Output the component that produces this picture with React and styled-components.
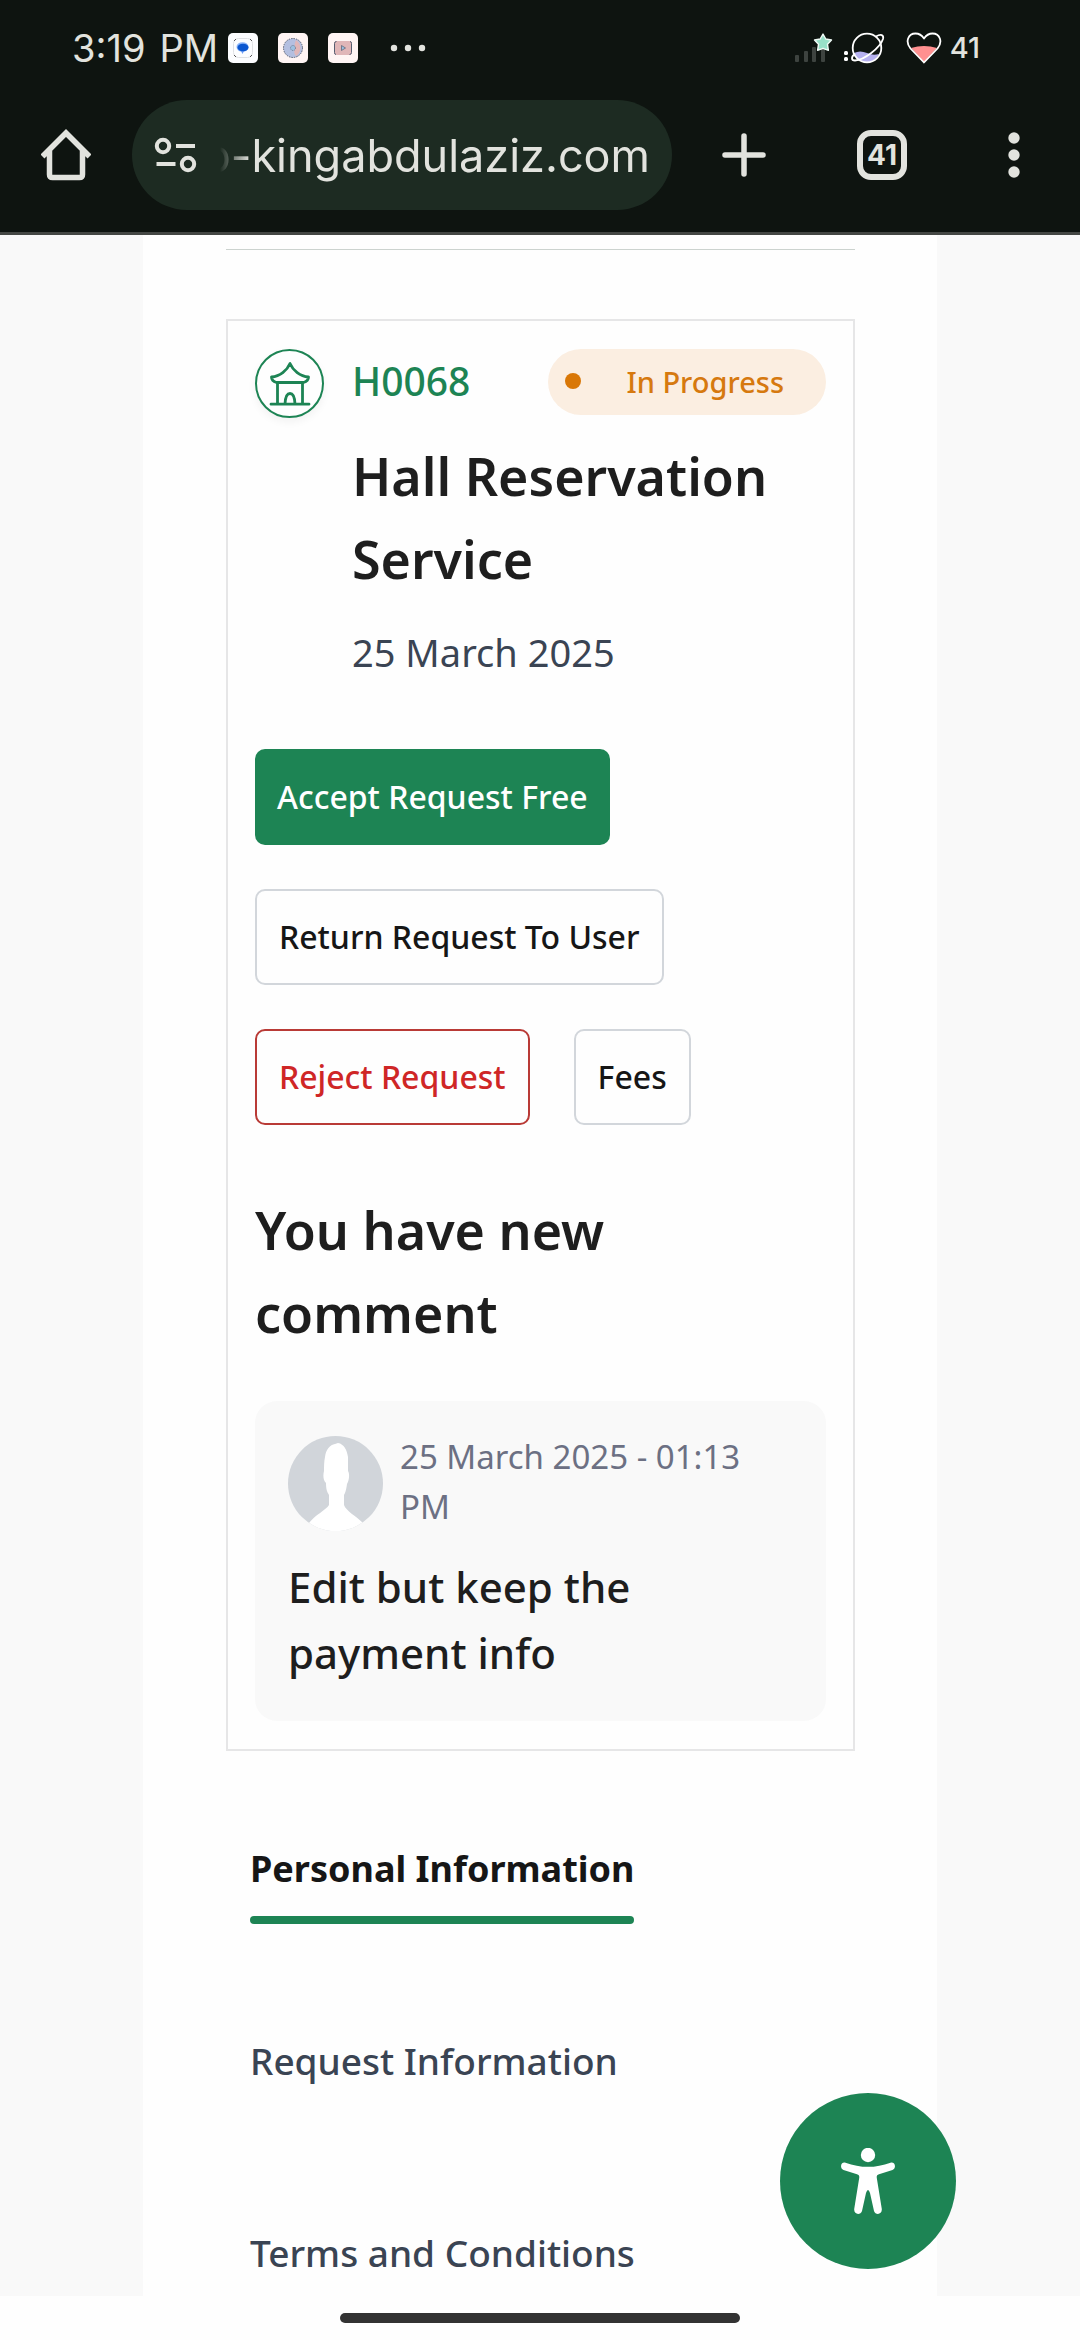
import React from "react";
import styled, { createGlobalStyle, css } from "styled-components";

const GlobalStyle = createGlobalStyle`
  *, *::before, *::after { box-sizing: border-box; }
  body { margin: 0; background: #fefefe; font-family: "Noto Sans", "Open Sans", sans-serif; }
  h1, h2, p { margin: 0; }
  button, input { font: inherit; color: inherit; margin: 0; padding: 0; border: 0; background: none; }
  svg { display: block; flex: none; }
`;

const green = "#1d8454";
const ink = "#1e1e1e";
const chrome = "#e2e3de";

const Screen = styled.div`
  display: flex;
  flex-direction: column;
  height: 100vh;
  overflow: hidden;
`;

/* ---------- browser chrome ---------- */

const Header = styled.header`
  flex: none;
  background: #0e1410;
  border-bottom: 3px solid #444744;
  color: ${chrome};
  font-family: Inter, Roboto, sans-serif;
`;

const StatusBar = styled.div`
  display: flex;
  align-items: center;
  justify-content: space-between;
  height: 96px;
  padding: 0 100px 0 72px;
`;

const StatusGroup = styled.div`
  display: flex;
  align-items: center;
  gap: ${(p) => p.$gap}px;
`;

const Clock = styled.time`
  display: flex;
  gap: 14px;
  font-size: 38px;
  line-height: 48px;
`;

const Battery = styled.span`
  font-size: 29px;
  font-weight: 500;
  line-height: 48px;
`;

const Toolbar = styled.div`
  display: flex;
  align-items: center;
  padding: 4px 0 22px;
`;

const ToolButton = styled.button`
  display: flex;
  align-items: center;
  justify-content: center;
  width: ${(p) => (p.$wide ? 144 : 132)}px;
  height: 96px;
`;

const AddressBar = styled.div`
  flex: 1;
  min-width: 0;
  display: flex;
  align-items: center;
  gap: 4px;
  height: 110px;
  padding: 0 22px;
  border-radius: 55px;
  background: #1d2b22;
`;

const UrlInput = styled.input`
  flex: 1;
  min-width: 0;
  height: 64px;
  text-align: right;
  font-size: 45px;
  outline: none;
  mask-image: linear-gradient(to right, transparent 18px, #000 48px);
`;

const TabCount = styled.span`
  display: flex;
  align-items: center;
  justify-content: center;
  width: 50px;
  height: 50px;
  border: 6px solid ${chrome};
  border-radius: 14px;
  font-size: 28px;
  font-weight: 700;
  line-height: 36px;
`;

/* ---------- page ---------- */

const Page = styled.main`
  flex: 1;
  min-height: 0;
  padding: 0 143px;
  overflow: hidden;
  background: #f9f9f9;
`;

const Sheet = styled.div`
  min-height: 100%;
  padding: 14px 82px 0 83px;
  background: #fefefe;
`;

const Divider = styled.hr`
  height: 1px;
  margin: 0 0 69px;
  border: 0;
  background: #ccd3cf;
`;

const Card = styled.section`
  padding: 28px 27px;
  border: 2px solid #e6e6e7;
`;

const RequestHeader = styled.div`
  display: grid;
  grid-template-columns: 69px 1fr;
  column-gap: 28px;
`;

const ServiceIcon = styled.div`
  display: flex;
  align-items: center;
  justify-content: center;
  width: 69px;
  height: 69px;
  border: 2px solid ${green};
  border-radius: 50%;
  box-shadow: 0 4px 8px rgba(0, 0, 0, 0.05);
  color: ${green};
`;

const RequestMeta = styled.div`
  display: flex;
  align-items: center;
  justify-content: space-between;
  height: 66px;
  margin-bottom: 19px;
`;

const RequestCode = styled.span`
  padding-bottom: 2px;
  color: ${green};
  font-size: 39px;
  font-weight: 500;
  line-height: 56px;
`;

const StatusBadge = styled.span`
  display: flex;
  align-items: center;
  gap: 45px;
  height: 66px;
  padding: 0 42px 2px 17px;
  border-radius: 33px;
  background: #fbeee1;
  color: #d6790f;
  font-size: 29px;
  font-weight: 500;

  &::before {
    content: "";
    width: 16px;
    height: 16px;
    border-radius: 50%;
    background: #d97706;
  }
`;

const Title = styled.h1`
  color: ${ink};
  font-size: 52px;
  font-weight: 600;
  line-height: 83px;
`;

const RequestDate = styled.p`
  margin-top: 24px;
  color: #3a4453;
  font-size: 38px;
  line-height: 56px;
`;

const Actions = styled.div`
  display: flex;
  flex-wrap: wrap;
  gap: 44px;
  margin: 69px 0 63px;
`;

const variants = {
  primary: css`
    background: ${green};
    color: #fff;
  `,
  outline: css`
    border: 2px solid #d2d6db;
    color: #161616;
  `,
  danger: css`
    border: 2px solid #b93a36;
    color: #cf2626;
  `,
};

const ActionButton = styled.button`
  height: 96px;
  padding: 0 22px;
  border-radius: 10px;
  font-size: 32px;
  font-weight: 500;
  line-height: 50px;
  ${(p) => variants[p.$variant]}
`;

const CommentTitle = styled(Title).attrs({ as: "h2" })`
  margin-bottom: 47px;
`;

const Comment = styled.article`
  padding: 31px 33px 35px;
  border-radius: 22px;
  background: #f9f9f9;
`;

const CommentHead = styled.div`
  display: flex;
  align-items: flex-start;
  gap: 17px;
  margin-bottom: 22px;
`;

const Avatar = styled.svg`
  width: 95px;
  height: 95px;
  margin-top: 4px;
  border-radius: 50%;
`;

const CommentTime = styled.p`
  max-width: 360px;
  color: #6c7083;
  font-size: 33px;
  line-height: 50px;
`;

const CommentText = styled.p`
  color: ${ink};
  font-size: 42px;
  font-weight: 500;
  line-height: 66px;
`;

const Tabs = styled.nav`
  display: flex;
  flex-direction: column;
  align-items: flex-start;
  gap: 109px;
  padding: 90px 24px 0;
`;

const TabLink = styled.a`
  color: #3a4453;
  font-size: 37px;
  font-weight: 500;
  line-height: 56px;
  text-decoration: none;

  &::after {
    content: "";
    display: block;
    height: 8px;
    margin-top: 19px;
    border-radius: 4px;
  }

  &[aria-current] {
    color: #161616;
    font-size: 36px;
    font-weight: 700;
  }

  &[aria-current]::after {
    background: ${green};
  }
`;

const AccessibilityButton = styled.button`
  position: fixed;
  right: 124px;
  bottom: 71px;
  display: flex;
  align-items: center;
  justify-content: center;
  width: 176px;
  height: 176px;
  border-radius: 50%;
  background: ${green};
  color: #fff;
`;

const GestureBar = styled.footer`
  flex: none;
  display: flex;
  justify-content: center;
  height: 44px;
  padding-top: 17px;
  background: #fefefe;

  &::before {
    content: "";
    width: 37%;
    height: 10px;
    border-radius: 5px;
    background: #333;
  }
`;

/* ---------- drawings ---------- */

const MessagesIcon = () => (
  <svg width="30" height="30" viewBox="0 0 30 30">
    <rect width="30" height="30" rx="5" fill="#fcfdff" />
    <rect x="5.5" y="5.5" width="19" height="19" rx="5" fill="none" stroke="#dfe1e4" />
    <path d="M6 8l2-2M22 6l2 2M6 22l2 2M22 24l2-2" stroke="#333" strokeWidth=".8" />
    <ellipse cx="14.500" cy="14" rx="6" ry="4.800" fill="#8ab4f8" />
    <path d="M12.500 17l2 4 1.500-3z" fill="#6b9df5" />
    <ellipse cx="15" cy="14.500" rx="5.500" ry="3.800" fill="#0b57d0" />
  </svg>
);

const RoundAppIcon = () => (
  <svg width="30" height="30" viewBox="0 0 30 30">
    <rect width="30" height="30" rx="5" fill="#fff5f4" />
    <circle cx="15" cy="15" r="9.500" fill="#b4bfe0" />
    <path d="M18 7a9.500 9.500 0 0 1 0 16q-3-3-1-7-1-5 1-9z" fill="#e0b6b8" />
    <circle cx="15" cy="15" r="9.500" fill="none" stroke="#555d70" strokeDasharray="1.500 1" />
    <circle cx="15" cy="15" r="2.500" fill="#9cc0e0" stroke="#555d70" strokeWidth=".7" strokeDasharray="1 1" />
  </svg>
);

const VideoAppIcon = () => (
  <svg width="30" height="30" viewBox="0 0 30 30">
    <rect width="30" height="30" rx="5" fill="#fff5f4" />
    <rect x="6" y="8" width="18" height="14" rx="3" fill="#e0b6b8" />
    <path d="M6.500 19.500v-9q0-2 2-2M23.500 10.500v9q0 2-2 2M8 21.500q-1.500 0-1.500-2M22 8.500q1.500 0 1.500 2" fill="none" stroke="#555d70" />
    <path d="M13.500 12.500l4 2.500-4 2.500z" fill="#9cc0e0" stroke="#555d70" strokeWidth=".7" />
  </svg>
);

const MoreDots = () => (
  <svg width="36" height="8" viewBox="0 0 36 8" fill={chrome}>
    <circle cx="4" cy="4" r="3.200" />
    <circle cx="18" cy="4" r="3.200" />
    <circle cx="32" cy="4" r="3.200" />
  </svg>
);

const SignalIcon = () => (
  <svg width="40" height="32" viewBox="0 0 40 32">
    <g fill="#3d433f">
      <rect x="0" y="23" width="4" height="7" rx="1" />
      <rect x="9" y="19" width="4" height="11" rx="1" />
      <rect x="17" y="15" width="4" height="15" rx="1" />
      <rect x="26" y="15" width="4" height="15" rx="1" />
    </g>
    <path d="M28 2l2.800 5 5.700 1-4 4.300.9 6-5.400-2-5.400 2 .9-6-4-4.300 5.700-1z" fill="#98e0c8" stroke="#f1fbf7" strokeWidth="1.400" strokeLinejoin="round" />
  </svg>
);

const PlanetIcon = () => (
  <svg width="42" height="32" viewBox="0 0 42 32">
    <rect x="0" y="19" width="4" height="4" rx="1.500" fill="#fff" />
    <rect x="0" y="25" width="4" height="4" rx="1.500" fill="#fff" />
    <path d="M10 21q6-3 13 0 6 3 12 1-4 8-12 8.500-10-.5-13-9.500z" fill="#b6b1f0" />
    <circle cx="23" cy="16" r="14.300" fill="none" stroke="#fff" strokeWidth="1.800" />
    <path d="M32 4.500c5-3 8-1.500 7 2.500C36 16 20 28 11 28.500c-4 0-4-4 0-6.500" fill="none" stroke="#fff" strokeWidth="1.800" />
  </svg>
);

const HeartIcon = () => (
  <svg width="36" height="32" viewBox="0 0 36 32">
    <path d="M5 16q13-4 26 0L18 30z" fill="#ff9090" />
    <path d="M18 30.500L4.500 16.500C-1 10 2 1.500 9.500 1.500c4 0 6.500 2 8.500 5 2-3 4.500-5 8.500-5 7.500 0 10.500 8.500 5 15z" fill="none" stroke="#fff" strokeWidth="1.800" strokeLinejoin="round" />
  </svg>
);

const HomeIcon = () => (
  <svg width="50" height="52" viewBox="0 0 50 52" fill="none" stroke={chrome} strokeWidth="5.500">
    <path d="M1.500 27.500L25 4l23.500 23.500M8.500 21v24.500q0 3 3 3h27q3 0 3-3V21" />
  </svg>
);

const TuneIcon = () => (
  <svg width="44" height="36" viewBox="0 0 44 36" fill="none" stroke={chrome} strokeWidth="4">
    <circle cx="9" cy="9" r="6.200" />
    <circle cx="34" cy="27" r="6.200" />
    <path d="M22 9h19M2.500 27h19" />
  </svg>
);

const PlusIcon = () => (
  <svg width="44" height="44" viewBox="0 0 44 44" stroke={chrome} strokeWidth="5.500" strokeLinecap="round">
    <path d="M22 3v38M3 22h38" />
  </svg>
);

const KebabIcon = () => (
  <svg width="12" height="46" viewBox="0 0 12 46" fill={chrome}>
    <circle cx="6" cy="6" r="5.700" />
    <circle cx="6" cy="23" r="5.700" />
    <circle cx="6" cy="40" r="5.700" />
  </svg>
);

const HallIcon = () => (
  <svg width="42" height="45" viewBox="0 0 42 45" fill="none" stroke="currentColor" strokeWidth="2.800" strokeLinecap="round" strokeLinejoin="round">
    <path d="M21 2.500c-3 7-10 13-18.500 13.500 0 3 2 4.500 5 5.500h27c3-1 5-2.500 5-5.500C31 15.500 24 9.500 21 2.500z" />
    <path d="M8.500 22v21M33.500 22v21M2 43.200h38M16 43q.500-10.500 5-10.500t5 10.500" />
  </svg>
);

const PersonPicture = () => (
  <Avatar viewBox="0 0 95 95" role="img" aria-label="User">
    <rect width="95" height="95" fill="#d1d5da" />
    <path fill="#fff" d="M50 7c6 1 9 7 10 14v14c2 3 1 10-1 13-1 7-2 9-3 11v10c2 6 12 11 19 18v8H21v-8c6-8 17-13 20-18V59c-2-3-3-6-3-12-3-3-3-8-2-12 0-5 0-9 1-14 1-8 5-12 10-13z" />
  </Avatar>
);

const AccessibilityIcon = () => (
  <svg width="54" height="66" viewBox="0 0 54 66" fill="currentColor">
    <circle cx="27" cy="7" r="7.200" />
    <path d="M4.500 14.700Q27 23 49.500 14.700c5-1 6 5.500 2 7.300L38 26.300c-2 .7-2.500 1.500-2.200 3.700l5 31c.5 6-6.500 6.500-7.800 2L29 45q-2-6-4 0l-4 18c-1.300 4.500-8.300 4-7.800-2l5-31c.3-2.200-.2-3-2.200-3.700L2.500 22c-4-1.800-3-8.300 2-7.300z" />
  </svg>
);

export default function App() {
  return (
    <Screen>
      <GlobalStyle />
      <Header>
        <StatusBar>
          <StatusGroup $gap={32}>
            <StatusGroup $gap={10}>
              <Clock>
                <span>3:19</span>
                <span>PM</span>
              </Clock>
              <StatusGroup $gap={20}>
                <MessagesIcon />
                <RoundAppIcon />
                <VideoAppIcon />
              </StatusGroup>
            </StatusGroup>
            <MoreDots />
          </StatusGroup>
          <StatusGroup $gap={20}>
            <StatusGroup $gap={9}>
              <SignalIcon />
              <PlanetIcon />
            </StatusGroup>
            <StatusGroup $gap={8}>
              <HeartIcon />
              <Battery>41</Battery>
            </StatusGroup>
          </StatusGroup>
        </StatusBar>
        <Toolbar>
          <ToolButton aria-label="Home"><HomeIcon /></ToolButton>
          <AddressBar>
            <TuneIcon />
            <UrlInput aria-label="Address" defaultValue="p-kingabdulaziz.com" />
          </AddressBar>
          <ToolButton $wide aria-label="New tab"><PlusIcon /></ToolButton>
          <ToolButton aria-label="Tabs"><TabCount>41</TabCount></ToolButton>
          <ToolButton aria-label="Menu"><KebabIcon /></ToolButton>
        </Toolbar>
      </Header>

      <Page>
        <Sheet>
          <Divider />
          <Card>
            <RequestHeader>
              <ServiceIcon><HallIcon /></ServiceIcon>
              <div>
                <RequestMeta>
                  <RequestCode>H0068</RequestCode>
                  <StatusBadge>In Progress</StatusBadge>
                </RequestMeta>
                <Title>Hall Reservation Service</Title>
                <RequestDate>25 March 2025</RequestDate>
              </div>
            </RequestHeader>
            <Actions>
              <ActionButton $variant="primary">Accept Request Free</ActionButton>
              <ActionButton $variant="outline">Return Request To User</ActionButton>
              <ActionButton $variant="danger">Reject Request</ActionButton>
              <ActionButton $variant="outline">Fees</ActionButton>
            </Actions>
            <CommentTitle>You have new comment</CommentTitle>
            <Comment>
              <CommentHead>
                <PersonPicture />
                <CommentTime>25 March 2025 - 01:13 PM</CommentTime>
              </CommentHead>
              <CommentText>Edit but keep the payment info</CommentText>
            </Comment>
          </Card>
          <Tabs>
            <TabLink href="#personal" aria-current="page">Personal Information</TabLink>
            <TabLink href="#request">Request Information</TabLink>
            <TabLink href="#terms">Terms and Conditions</TabLink>
          </Tabs>
        </Sheet>
      </Page>

      <AccessibilityButton aria-label="Accessibility"><AccessibilityIcon /></AccessibilityButton>
      <GestureBar />
    </Screen>
  );
}
